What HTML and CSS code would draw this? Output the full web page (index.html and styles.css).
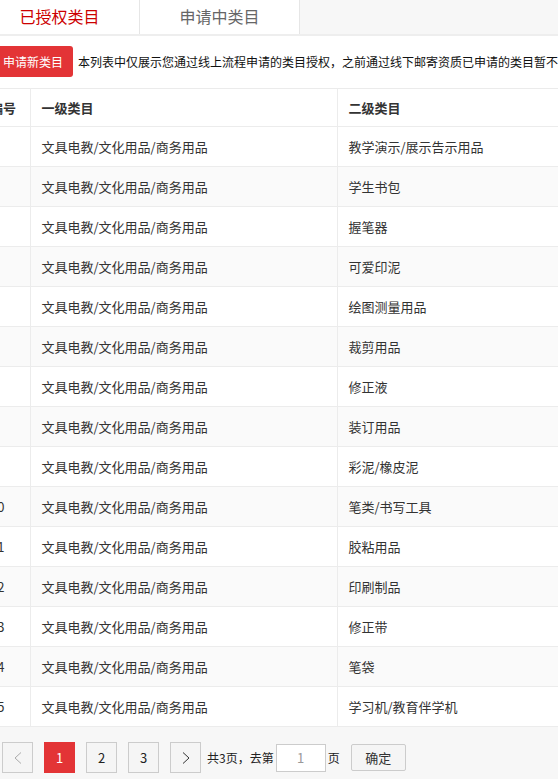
FILE: index.html
```html
<!DOCTYPE html>
<html lang="zh-CN">
<head>
<meta charset="utf-8">
<title>已授权类目</title>
<link rel="stylesheet" href="styles.css">
</head>
<body>
<div class="page">
  <div class="panel">
    <div class="tabs">
      <div class="tab tab-active">已授权类目</div>
      <div class="tab">申请中类目</div>
      <div class="tab-rest"></div>
    </div>
    <div class="toolbar">
      <button class="btn-apply">申请新类目</button>
      <span class="notice">本列表中仅展示您通过线上流程申请的类目授权，之前通过线下邮寄资质已申请的类目暂不展示，如需查看请联系客服。</span>
    </div>
    <table class="cat-table">
      <colgroup><col class="c1"><col class="c2"><col class="c3"></colgroup>
      <thead>
        <tr><th>编号</th><th>一级类目</th><th>二级类目</th></tr>
      </thead>
      <tbody>
        <tr><td>1</td><td>文具电教/文化用品/商务用品</td><td>教学演示/展示告示用品</td></tr>
        <tr><td>2</td><td>文具电教/文化用品/商务用品</td><td>学生书包</td></tr>
        <tr><td>3</td><td>文具电教/文化用品/商务用品</td><td>握笔器</td></tr>
        <tr><td>4</td><td>文具电教/文化用品/商务用品</td><td>可爱印泥</td></tr>
        <tr><td>5</td><td>文具电教/文化用品/商务用品</td><td>绘图测量用品</td></tr>
        <tr><td>6</td><td>文具电教/文化用品/商务用品</td><td>裁剪用品</td></tr>
        <tr><td>7</td><td>文具电教/文化用品/商务用品</td><td>修正液</td></tr>
        <tr><td>8</td><td>文具电教/文化用品/商务用品</td><td>装订用品</td></tr>
        <tr><td>9</td><td>文具电教/文化用品/商务用品</td><td>彩泥/橡皮泥</td></tr>
        <tr><td>10</td><td>文具电教/文化用品/商务用品</td><td>笔类/书写工具</td></tr>
        <tr><td>11</td><td>文具电教/文化用品/商务用品</td><td>胶粘用品</td></tr>
        <tr><td>12</td><td>文具电教/文化用品/商务用品</td><td>印刷制品</td></tr>
        <tr><td>13</td><td>文具电教/文化用品/商务用品</td><td>修正带</td></tr>
        <tr><td>14</td><td>文具电教/文化用品/商务用品</td><td>笔袋</td></tr>
        <tr><td>15</td><td>文具电教/文化用品/商务用品</td><td>学习机/教育伴学机</td></tr>
      </tbody>
    </table>
  </div>
  <div class="pager">
    <span class="pg pg-prev"><svg width="8" height="12" viewBox="0 0 8 12"><path d="M7 0.5 L1 6 L7 11.5" fill="none" stroke="#aaa" stroke-width="1"/></svg></span>
    <span class="pg pg-active">1</span>
    <span class="pg">2</span>
    <span class="pg">3</span>
    <span class="pg pg-next"><svg width="8" height="12" viewBox="0 0 8 12"><path d="M1 0.5 L7 6 L1 11.5" fill="none" stroke="#333" stroke-width="1"/></svg></span>
    <span class="pg-text">共3页，去第</span>
    <input class="pg-input" type="text" value="1">
    <span class="pg-unit">页</span>
    <button class="pg-go">确定</button>
  </div>
</div>
</body>
</html>
```

FILE: styles.css
```css
html, body {
  margin: 0;
  padding: 0;
  overflow: hidden;
  background: #f7f7f7;
}
body {
  font-family: "Noto Sans CJK SC", "Microsoft YaHei", sans-serif;
  color: #333;
  font-size: 13px;
}
.page {
  margin-left: -20px;
  width: 640px;
}
.panel {
  background: #fff;
}
.tabs {
  display: flex;
  height: 34px;
  border-bottom: 2px solid #eee;
  background: #f7f7f7;
}
.tab {
  width: 159px;
  border-right: 1px solid #e6e6e6;
  background: #fff;
  text-align: center;
  line-height: 32px;
  font-size: 16px;
  color: #666;
}
.tab-active {
  color: #cc0000;
}
.tab-rest {
  flex: 1;
}
.toolbar {
  display: flex;
  align-items: center;
  padding-top: 10px;
  height: 31px;
  white-space: nowrap;
  overflow: hidden;
}
.btn-apply {
  margin-left: 11px;
  height: 31px;
  padding: 0 10px 0 12px;
  border: none;
  border-radius: 0 3px 3px 0;
  background: #e33436;
  color: #fff;
  font-family: inherit;
  font-size: 12px;
  line-height: 31px;
}
.notice {
  margin-left: 5px;
  font-size: 12px;
  color: #111;
}
.cat-table {
  margin-top: 11px;
  width: 620px;
  table-layout: fixed;
  border-collapse: collapse;
  border-top: 1px solid #ebebeb;
}
.c1 { width: 50px; }
.c2 { width: 307px; }
.c3 { width: 263px; }
.cat-table th,
.cat-table td {
  text-align: left;
  padding: 0 0 0 11px;
  border-bottom: 1px solid #ececec;
  border-left: 1px solid #ececec;
  white-space: nowrap;
  overflow: hidden;
}
.cat-table th:first-child,
.cat-table td:first-child {
  border-left: none;
  padding-left: 10px;
}
.cat-table th {
  height: 37px;
  font-weight: bold;
  color: #333;
  font-size: 13px;
}
.cat-table td {
  height: 39px;
  color: #333;
  font-size: 13px;
}
.cat-table tbody tr:nth-child(even) td {
  background: #fafafa;
}
.pager {
  display: flex;
  align-items: center;
  padding: 15px 0 0 22px;
  height: 31px;
  font-size: 12px;
  color: #222;
}
.pg {
  box-sizing: border-box;
  width: 31px;
  height: 31px;
  margin-right: 11px;
  border: 1px solid #cccccc;
  background: #f5f5f5;
  display: flex;
  align-items: center;
  justify-content: center;
  font-size: 13px;
  color: #222;
}
.pg-active {
  background: #e33436;
  border-color: #e33436;
  color: #fff;
}
.pg-next {
  margin-right: 6px;
}
.pg-text {
  font-size: 12px;
}
.pg-input {
  box-sizing: border-box;
  width: 50px;
  height: 28px;
  margin: 0 0 0 2px;
  border: 1px solid #cccccc;
  background: #fff;
  text-align: center;
  font-family: inherit;
  font-size: 13px;
  color: #999;
  padding: 0;
}
.pg-unit {
  margin-left: 2px;
  font-size: 12px;
}
.pg-go {
  box-sizing: border-box;
  margin-left: 11px;
  width: 55px;
  height: 27px;
  border: 1px solid #cccccc;
  border-radius: 2px;
  background: #f5f5f5;
  font-family: inherit;
  font-size: 13px;
  color: #333;
  padding: 0;
}
```
